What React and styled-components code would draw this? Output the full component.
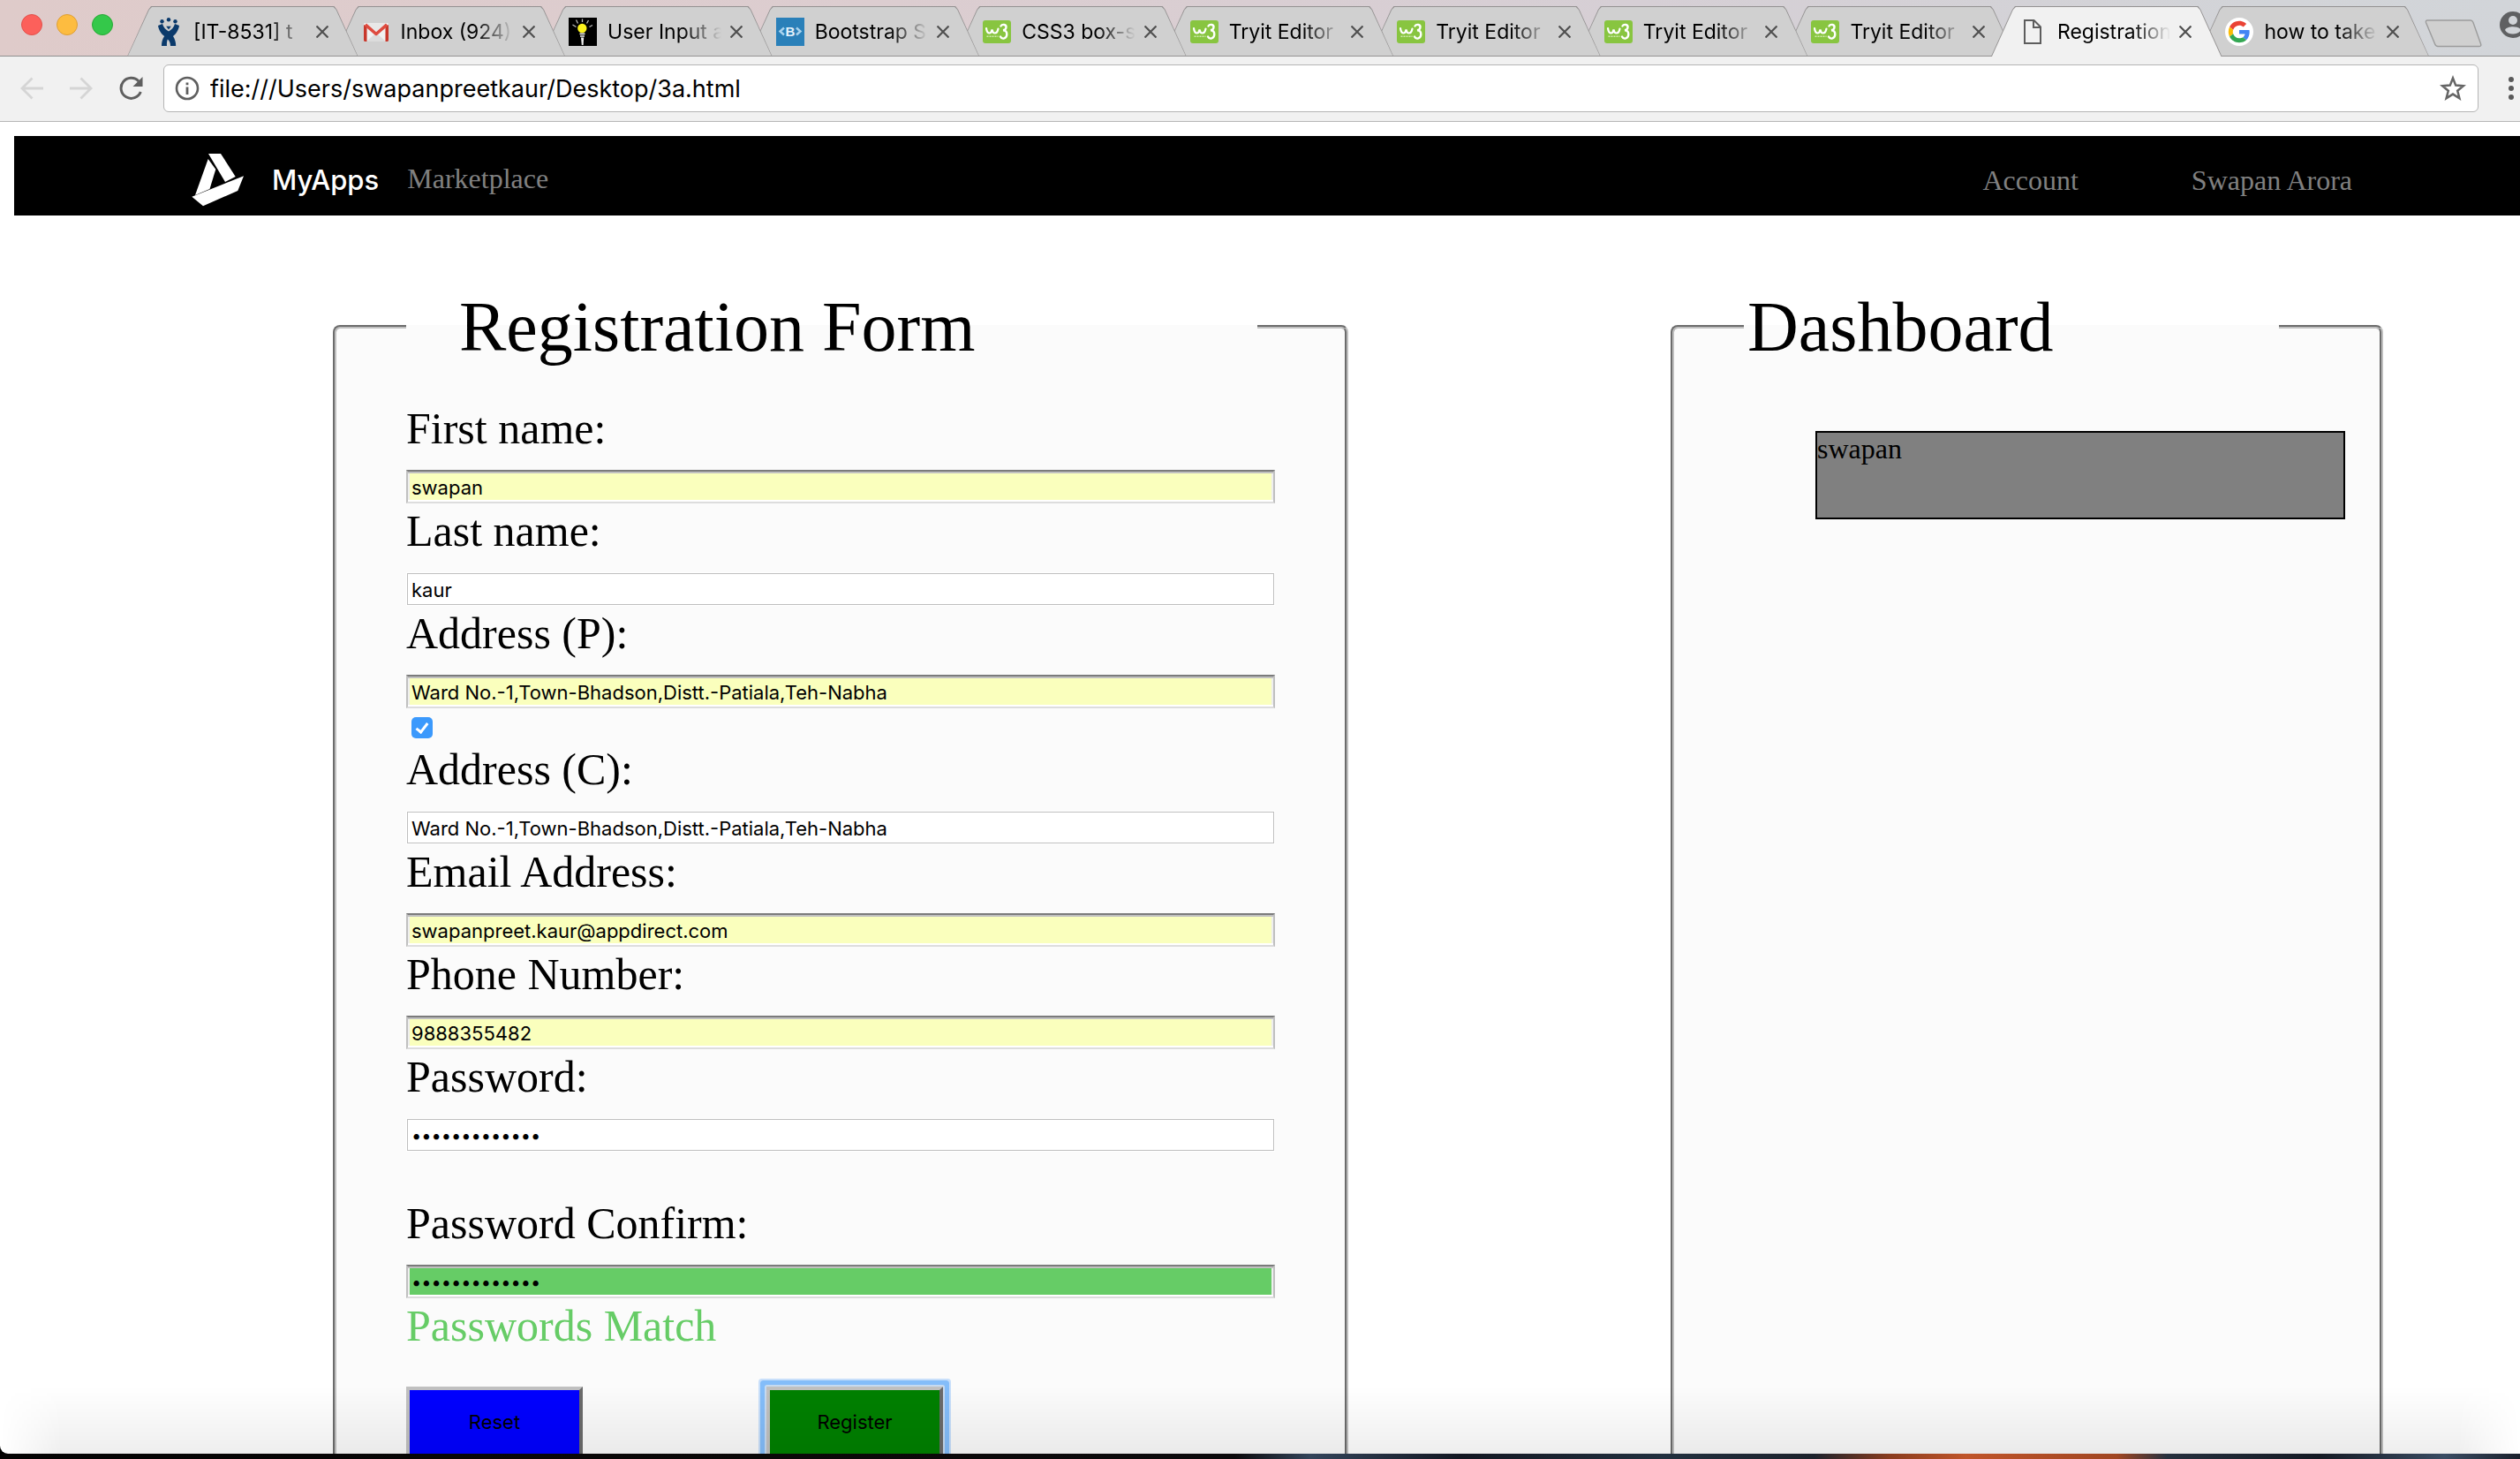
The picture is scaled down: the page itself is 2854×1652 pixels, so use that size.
import React from "react";
import styled, { createGlobalStyle, css } from "styled-components";

const sans = `Inter, Roboto, "Liberation Sans", sans-serif`;
const serif = `"Liberation Serif", "Times New Roman", serif`;

const GlobalStyle = createGlobalStyle`
  *, *::before, *::after { box-sizing: border-box; }
  html, body { margin: 0; background: #000; }
  body { font-family: ${serif}; color: #000; }
  a { text-decoration: none; }
  button { font-family: ${sans}; color: inherit; }
`;

const BrowserWindow = styled.div`
  display: flex;
  flex-direction: column;
  height: 100vh;
  overflow: hidden;
`;

const TabStrip = styled.header`
  display: flex;
  align-items: center;
  height: 64px;
  flex: none;
  padding-left: 24px;
  overflow: hidden;
  background: linear-gradient(90deg, #dfcbca 0%, #dccdd0 35%, #d6cfd5 65%, #d2d4d8 90%, #d2d5d9 100%);
  box-shadow: inset 0 -1px #8f8f8f;
`;

const Lights = styled.div`
  display: flex;
  gap: 16px;
  margin: 0 16px 8px 0;
`;

const Light = styled.button`
  width: 24px;
  height: 24px;
  padding: 0;
  border: 1px solid ${(p) => p.$edge};
  border-radius: 50%;
  background: ${(p) => p.$fill};
`;

const Tabs = styled.nav`
  display: flex;
  flex: 1;
  min-width: 0;
  align-self: flex-end;
  height: 57px;
`;

const TabBox = styled.div`
  position: relative;
  z-index: ${(p) => p.$level};
  display: flex;
  align-items: center;
  flex: 1 1 0;
  min-width: 0;
  height: 57px;
  padding: 1px 34px 0 31px;

  & + & { margin-left: -27px; }

  &::before, &::after {
    content: "";
    position: absolute;
    z-index: -1;
    inset: 0;
  }
  &::before {
    background: #949292;
    clip-path: polygon(0 100%, 24px 4px, 27px 0, calc(100% - 27px) 0, calc(100% - 24px) 4px, 100% 100%);
  }
  &::after {
    bottom: ${(p) => (p.$active ? "0" : "1px")};
    background: ${(p) => (p.$active ? "#f1f1f1" : "#d0d0d0")};
    clip-path: polygon(1px 100%, 25px 4px, 28px 1px, calc(100% - 28px) 1px, calc(100% - 25px) 4px, calc(100% - 1px) 100%);
  }
`;

const TabIcon = styled.span`
  display: flex;
  align-items: center;
  justify-content: center;
  flex: none;
  width: 32px;
  height: 32px;
  margin-right: 12px;
`;

const TabTitle = styled.button`
  flex: 1;
  min-width: 0;
  overflow: hidden;
  padding: 0;
  border: 0;
  background: none;
  text-align: left;
  white-space: nowrap;
  font-size: 23px;
  line-height: 32px;
  mask-image: linear-gradient(90deg, #000 calc(100% - 48px), transparent calc(100% - 4px));
`;

const TabClose = styled.button`
  display: flex;
  flex: none;
  margin-left: 6px;
  padding: 0;
  border: 0;
  background: none;
`;

const NewTab = styled.button`
  position: relative;
  z-index: 30;
  display: flex;
  flex: none;
  margin: 12px 20px 0 -5px;
  padding: 0;
  border: 0;
  background: none;
`;

const Profile = styled.button`
  display: flex;
  flex: none;
  margin: 0 -7px 8px 0;
  padding: 0;
  border: 0;
  background: none;
`;

const Toolbar = styled.div`
  display: flex;
  align-items: center;
  flex: none;
  height: 74px;
  padding: 0 7px 1px 22px;
  background: #f1f1f1;
  border-bottom: 1px solid #b6b6b6;
`;

const ToolButtons = styled.div`
  display: flex;
  gap: 28px;
  margin-right: 21px;
`;

const ToolButton = styled.button`
  display: flex;
  flex: none;
  padding: 0;
  border: 0;
  background: none;
`;

const AddressBar = styled.div`
  display: flex;
  align-items: center;
  flex: 1;
  height: 54px;
  margin-right: 34px;
  padding: 0 13px 0 12px;
  background: #fff;
  border: 1px solid #b5b5b5;
  border-radius: 6px;
`;

const AddressInput = styled.input`
  flex: 1;
  min-width: 0;
  margin: 0 12px;
  padding: 2px 0 0;
  border: 0;
  outline: 0;
  background: none;
  color: #000;
  font: 27px/36px ${sans};
`;

const Page = styled.main`
  position: relative;
  flex: 1;
  min-height: 0;
  overflow: hidden;
  background: #fff;
  border-radius: 0 0 0 9px;

  &::after {
    content: "";
    position: absolute;
    inset: auto 0 0 0;
    height: 76px;
    pointer-events: none;
    background: linear-gradient(180deg, transparent, rgba(0, 0, 0, 0.065));
    mask-image: linear-gradient(90deg, transparent, #000 70px, #000 calc(100% - 70px), transparent);
  }
`;

const SiteBar = styled.nav`
  display: flex;
  align-items: center;
  height: 90px;
  margin: 16px 0 0 16px;
  padding: 10px 190px 0 200px;
  background: #000;
`;

const SiteLink = styled.a`
  color: ${(p) => (p.$brand ? "#fff" : "#808080")};
  font: ${(p) => (p.$brand ? `500 31px/36px ${sans}` : `32px/36px ${serif}`)};
  margin-left: ${(p) => p.$gap}px;
  ${(p) => p.$raised && css`padding-bottom: 4px;`}
`;

const Spacer = styled.div`
  flex: 1;
`;

const Columns = styled.div`
  display: grid;
  grid-template-columns: minmax(0, 1150fr) minmax(0, 807fr);
  gap: 365px;
  padding: 80px 155px 0 377px;
`;

const Panel = styled.fieldset`
  min-width: 0;
  margin: 0;
  padding: 40px ${(p) => p.$end}px 40px 79px;
  border: 4px groove #c0c0c0;
  border-radius: 8px;
  background: #fbfbfb;
`;

const Legend = styled.legend`
  width: ${(p) => p.$width};
  padding: 0 ${(p) => p.$indent}px;
  font-size: 80px;
  line-height: 92px;
`;

const Field = styled.div`
  display: flex;
  flex-direction: column;
  padding-bottom: 2px;
  margin-top: ${(p) => (p.$apart ? 50 : 0)}px;
`;

const FieldLabel = styled.label`
  margin-bottom: 18px;
  font-size: 50px;
  line-height: 58px;
`;

const TextInput = styled.input`
  width: 100%;
  height: 38px;
  outline: 0;
  border-radius: 0;
  color: #000;
  font: 22px/26px ${sans};
  ${(p) =>
    p.$fill
      ? css`
          padding: 2px 4px 0;
          border: 2px solid;
          border-color: #7b7b7b #c0c0c0 #dddddd #c0c0c0;
          background: ${p.$fill};
          box-shadow: inset 0 2px #c0c0c0, inset 0 -2px #fff, inset 2px 0 #eee, inset -2px 0 #eee;
        `
      : css`
          padding: 2px 5px 0;
          border: 1px solid #fff;
          background: #fff;
          box-shadow: inset 0 0 0 1px #bfbfbf;
        `}

  &[type="password"] { font-size: 20px; }
`;

const CheckRow = styled.div`
  height: 38px;
  padding: 8px 0 0 6px;
`;

const Check = styled.input`
  display: flex;
  align-items: center;
  justify-content: center;
  appearance: none;
  width: 24px;
  height: 24px;
  margin: 0;
  border-radius: 5px;
  background: #3b99fc;

  &::after {
    content: "";
    width: 8px;
    height: 14px;
    margin-bottom: 3px;
    border: solid #fff;
    border-width: 0 3px 3px 0;
    transform: rotate(38deg);
  }
`;

const MatchNote = styled.p`
  margin: 0 0 40px;
  color: #66cc66;
  font-size: 50px;
  line-height: 58px;
`;

const Actions = styled.div`
  display: flex;
  gap: 208px;
`;

const ActionButton = styled.button`
  width: 200px;
  height: 80px;
  padding: 0;
  border: 4px solid;
  border-color: #c0c0c0 #6b6b6b #6b6b6b #c0c0c0;
  background: ${(p) => p.$fill};
  color: #000;
  font-size: 22px;
  ${(p) =>
    p.$focused &&
    css`
      border-radius: 1px;
      box-shadow: 0 0 0 2px #c6daf0, 0 0 0 7px #84bdf9, 0 0 0 9px #c8dffa;
    `}
`;

const UserCard = styled.div`
  height: 100px;
  margin: 32px 0 0 81px;
  border: 2px solid #000;
  background: #808080;
  font-size: 32px;
  line-height: 36px;
`;

const Wallpaper = styled.footer`
  flex: none;
  height: 6px;
  background: linear-gradient(
    90deg,
    #040303 0%, #0b0808 30%, #0c0a0c 49%, #33445a 52%, #131722 58%, #22303f 66%,
    #1d222c 72%, #8a3c1e 75%, #c0552a 78%, #a14622 84%, #26303e 86%, #151a24 92%, #3a4c63 97%, #1a202c 100%
  );
`;

const JiraIcon = () => (
  <svg width="24" height="32" viewBox="0 0 24 32" fill="#0b3a6b" aria-hidden="true">
    <circle cx="4.500" cy="4.200" r="2.200" />
    <circle cx="12" cy="2.200" r="2.200" />
    <circle cx="19.500" cy="4.200" r="2.200" />
    <path d="M0 9l5-2c1 4 4 7 7 8.500 3-1.500 6-4.500 7-8.500l5 2c-1 6-4 9.500-7 12 2.200 3 3.200 7 3.200 11H14c0-3.800-1.200-6-3.200-7.500C10 27 9.800 29 10 32H4c0-4 .8-8 3.200-11C4 18.500 1 15 0 9z" />
    <path d="M9.200 9.800h5.600L12 13.500z" />
  </svg>
);

const GmailIcon = () => (
  <svg width="28" height="21" viewBox="0 0 28 21" aria-hidden="true">
    <rect width="28" height="21" rx="1.500" fill="#f1f1f1" />
    <path d="M3 21 14 11l11 10z" fill="#dcdcdc" />
    <path d="M3 0h22L14 9.500z" fill="#e8e8e8" />
    <path d="M0 2l3.500 2v17H1.500Q0 21 0 19.500zM28 2l-3.500 2v17h2q1.500 0 1.500-1.500z" fill="#c8372b" />
    <path d="M1.800 1.800 14 12.500 26.200 1.800" fill="none" stroke="#de4b3f" strokeWidth="3.600" strokeLinejoin="round" />
  </svg>
);

const BulbIcon = () => (
  <svg width="32" height="32" viewBox="0 0 32 32" aria-hidden="true">
    <rect width="32" height="32" fill="#000" />
    <path d="M4.500 8l4 2.500M8.500 2.500l2 4M15.500 1.500V5M22.500 3l-2 3.500M27 8.500l-3.500 2" stroke="#bbb" strokeWidth="1.300" />
    <circle cx="15.300" cy="12" r="5.200" fill="#fbf21c" />
    <path d="M12.500 17.500h6v1.800h-6zM13 20.300h5v1.500h-5zM14 22.500h3.200l-.6 8.500h-1.800z" fill="#eee" />
  </svg>
);

const BootstrapIcon = () => (
  <svg width="32" height="32" viewBox="0 0 32 32" aria-hidden="true">
    <rect width="32" height="32" fill="#2a80b9" />
    <path d="M9 11.500 4.500 15.500 9 19.500M23 11.500l4.500 4-4.500 4" fill="none" stroke="#a9d3ee" strokeWidth="2.400" />
    <text x="16" y="21" textAnchor="middle" fill="#e4f2fb" fontFamily="Liberation Sans, sans-serif" fontWeight="700" fontSize="15">B</text>
  </svg>
);

const W3Icon = () => (
  <svg width="32" height="26" viewBox="0 0 32 26" aria-hidden="true">
    <rect width="32" height="26" rx="3" fill="#88c540" />
    <path d="M4 9c.5 3.500 1.500 5.500 3.500 5.500s2.500-1.500 3-4c.5 2.500 1.500 4 3.200 4 2 0 3.300-2 3.800-5" fill="none" stroke="#fff" strokeWidth="2.200" strokeLinecap="round" />
    <path d="M20.500 6.500c1.500-2.500 6.500-2 6 1.500-.2 2-1.800 3-3.500 3.200 2.500 0 4.500 1.500 4.300 4.800-.2 5-5.500 6-7.300 2.500" fill="none" stroke="#fff" strokeWidth="2.400" strokeLinecap="round" />
    <path d="M4.500 18.200h13" stroke="#cfe9ad" strokeWidth="1.600" strokeDasharray="2 1" />
  </svg>
);

const FileIcon = () => (
  <svg width="22" height="28" viewBox="0 0 22 28" fill="none" stroke="#5d5d5d" strokeWidth="2" aria-hidden="true">
    <path d="M2 1h10.500L20 8.500V27H2z" />
    <path d="M12 1v8h8" />
  </svg>
);

const GoogleIcon = () => (
  <svg width="32" height="32" viewBox="0 0 32 32" aria-hidden="true">
    <circle cx="16" cy="16" r="16" fill="#fff" />
    <g transform="translate(3.800 3.800) scale(0.508)">
      <path fill="#EA4335" d="M24 9.500c3.540 0 6.710 1.220 9.210 3.600l6.850-6.850C35.900 2.380 30.470 0 24 0 14.620 0 6.510 5.380 2.560 13.220l7.980 6.190C12.430 13.720 17.740 9.500 24 9.500z" />
      <path fill="#4285F4" d="M46.980 24.550c0-1.570-.15-3.090-.38-4.550H24v9.020h12.940c-.58 2.960-2.260 5.480-4.780 7.180l7.730 6c4.510-4.180 7.090-10.360 7.090-17.650z" />
      <path fill="#FBBC05" d="M10.530 28.590c-.48-1.450-.76-2.990-.76-4.590s.27-3.140.76-4.590l-7.980-6.190C.92 16.460 0 20.120 0 24c0 3.880.92 7.540 2.560 10.780l7.970-6.190z" />
      <path fill="#34A853" d="M24 48c6.480 0 11.930-2.130 15.890-5.810l-7.730-6c-2.150 1.450-4.920 2.300-8.160 2.300-6.260 0-11.570-4.220-13.470-9.910l-7.980 6.190C6.510 42.620 14.620 48 24 48z" />
    </g>
  </svg>
);

const CloseIcon = () => (
  <svg width="14" height="14" viewBox="0 0 14 14" stroke="#505050" strokeWidth="2.200" aria-hidden="true">
    <path d="M0.500.5l13 13M13.500.5l-13 13" />
  </svg>
);

const BackIcon = () => (
  <svg width="28" height="28" viewBox="0 0 28 28" fill="none" stroke="#d5d5d5" strokeWidth="2.800" aria-hidden="true">
    <path d="M27 14H3M14.500 2.500 3 14l11.500 11.500" />
  </svg>
);

const ForwardIcon = () => (
  <svg width="28" height="28" viewBox="0 0 28 28" fill="none" stroke="#d5d5d5" strokeWidth="2.800" aria-hidden="true">
    <path d="M1 14h24M13.500 2.500 25 14 13.500 25.500" />
  </svg>
);

const ReloadIcon = () => (
  <svg width="30" height="28" viewBox="0 0 30 28" aria-hidden="true">
    <path d="M23 6A11.500 11.500 0 1 0 25.300 18" fill="none" stroke="#5f5f5f" strokeWidth="3" />
    <path d="M27.500 1v11h-11z" fill="#5f5f5f" />
  </svg>
);

const InfoIcon = () => (
  <svg width="28" height="28" viewBox="0 0 28 28" aria-hidden="true">
    <circle cx="14" cy="14" r="12" fill="none" stroke="#5f5f5f" strokeWidth="2.600" />
    <path d="M12.600 12.500h2.800V21h-2.800zM12.600 7.500h2.800v2.800h-2.800z" fill="#5f5f5f" />
  </svg>
);

const StarIcon = () => (
  <svg width="30" height="30" viewBox="0 0 30 30" fill="none" stroke="#656565" strokeWidth="2.500" aria-hidden="true">
    <path d="M15 3.500l3.200 8.100 8.800.6-6.800 5.600 2.200 8.500L15 21.600l-7.400 4.700 2.200-8.500L3 12.200l8.800-.6z" />
  </svg>
);

const MenuIcon = () => (
  <svg width="6" height="28" viewBox="0 0 6 28" fill="#5a5a5a" aria-hidden="true">
    <circle cx="3" cy="4" r="3" />
    <circle cx="3" cy="14" r="3" />
    <circle cx="3" cy="24" r="3" />
  </svg>
);

const NewTabShape = () => (
  <svg width="65" height="32" viewBox="0 0 65 32" aria-hidden="true">
    <path d="M3 1h49q2 0 3 2.500l8.500 24q1 3-1.500 3H15q-2.500 0-3.500-3L1.500 3.500Q1 1 3 1z" fill="#d0d0d0" stroke="#9c9c9c" strokeWidth="1.400" />
  </svg>
);

const PersonIcon = () => (
  <svg width="30" height="30" viewBox="0 0 30 30" aria-hidden="true">
    <circle cx="15" cy="15" r="15" fill="#5f6062" />
    <circle cx="15" cy="10" r="5" fill="#d2d5d9" />
    <path d="M6 21c2-5 16-5 18 0-3 6-15 6-18 0z" fill="#d2d5d9" />
  </svg>
);

const LogoMark = () => (
  <svg width="62" height="62" viewBox="0 0 62 62" fill="#fff" aria-label="AppDirect">
    <path d="M20 1h14l16.700 26L39 33z" />
    <path d="M19.700 7 28.300 18.700 21.500 41 5 48z" />
    <path d="M60 26.300 53.300 43 14 60.300 1.300 49.700z" />
  </svg>
);

const tabs = [
  { title: "[IT-8531] t", Icon: JiraIcon },
  { title: "Inbox (924)", Icon: GmailIcon },
  { title: "User Input a", Icon: BulbIcon },
  { title: "Bootstrap S", Icon: BootstrapIcon },
  { title: "CSS3 box-s", Icon: W3Icon },
  { title: "Tryit Editor", Icon: W3Icon },
  { title: "Tryit Editor", Icon: W3Icon },
  { title: "Tryit Editor", Icon: W3Icon },
  { title: "Tryit Editor", Icon: W3Icon },
  { title: "Registration", Icon: FileIcon, active: true },
  { title: "how to take", Icon: GoogleIcon },
];

const AUTOFILL = "#faffbd";
const MATCH = "#66cc66";
const address = "Ward No.-1,Town-Bhadson,Distt.-Patiala,Teh-Nabha";

function FormField({ id, label, value, fill, type = "text", apart }) {
  return (
    <Field $apart={apart}>
      <FieldLabel htmlFor={id}>{label}</FieldLabel>
      <TextInput id={id} type={type} defaultValue={value} $fill={fill} />
    </Field>
  );
}

export default function App() {
  return (
    <BrowserWindow>
      <GlobalStyle />
      <TabStrip>
        <Lights>
          <Light aria-label="Close" $fill="#fc605b" $edge="#e2504a" />
          <Light aria-label="Minimize" $fill="#fdbc40" $edge="#df9f34" />
          <Light aria-label="Zoom" $fill="#34c84a" $edge="#27aa35" />
        </Lights>
        <Tabs>
          {tabs.map(({ title, Icon, active }, i) => (
            <TabBox key={i} $active={active} $level={active ? 20 : 15 - i}>
              <TabIcon><Icon /></TabIcon>
              <TabTitle>{title}</TabTitle>
              <TabClose aria-label="Close tab"><CloseIcon /></TabClose>
            </TabBox>
          ))}
        </Tabs>
        <NewTab aria-label="New tab"><NewTabShape /></NewTab>
        <Profile aria-label="Profile"><PersonIcon /></Profile>
      </TabStrip>

      <Toolbar>
        <ToolButtons>
          <ToolButton aria-label="Back"><BackIcon /></ToolButton>
          <ToolButton aria-label="Forward"><ForwardIcon /></ToolButton>
          <ToolButton aria-label="Reload"><ReloadIcon /></ToolButton>
        </ToolButtons>
        <AddressBar>
          <InfoIcon />
          <AddressInput aria-label="Address" defaultValue="file:///Users/swapanpreetkaur/Desktop/3a.html" />
          <ToolButton aria-label="Bookmark"><StarIcon /></ToolButton>
        </AddressBar>
        <ToolButton aria-label="Menu"><MenuIcon /></ToolButton>
      </Toolbar>

      <Page>
        <SiteBar>
          <LogoMark />
          <SiteLink href="#apps" $brand $gap={30}>MyApps</SiteLink>
          <SiteLink href="#market" $gap={32} $raised>Marketplace</SiteLink>
          <Spacer />
          <SiteLink href="#account" $gap={0}>Account</SiteLink>
          <SiteLink href="#profile" $gap={128}>Swapan Arora</SiteLink>
        </SiteBar>

        <Columns>
          <Panel $end={79}>
            <Legend $width="98%" $indent={60}>Registration Form</Legend>
            <FormField id="first" label="First name:" value="swapan" fill={AUTOFILL} />
            <FormField id="last" label="Last name:" value="kaur" />
            <FormField id="addressP" label="Address (P):" value={address} fill={AUTOFILL} />
            <CheckRow>
              <Check type="checkbox" aria-label="Same address" defaultChecked />
            </CheckRow>
            <FormField id="addressC" label="Address (C):" value={address} />
            <FormField id="email" label="Email Address:" value="swapanpreet.kaur@appdirect.com" fill={AUTOFILL} />
            <FormField id="phone" label="Phone Number:" value="9888355482" fill={AUTOFILL} />
            <FormField id="password" label="Password:" type="password" value="abcdefghijklm" />
            <FormField id="confirm" label="Password Confirm:" type="password" value="abcdefghijklm" fill={MATCH} apart />
            <MatchNote>Passwords Match</MatchNote>
            <Actions>
              <ActionButton type="reset" $fill="#0000ff">Reset</ActionButton>
              <ActionButton type="submit" $fill="#008000" $focused>Register</ActionButton>
            </Actions>
          </Panel>

          <Panel $end={39}>
            <Legend $width="89%" $indent={4}>Dashboard</Legend>
            <UserCard>swapan</UserCard>
          </Panel>
        </Columns>
      </Page>
      <Wallpaper />
    </BrowserWindow>
  );
}
